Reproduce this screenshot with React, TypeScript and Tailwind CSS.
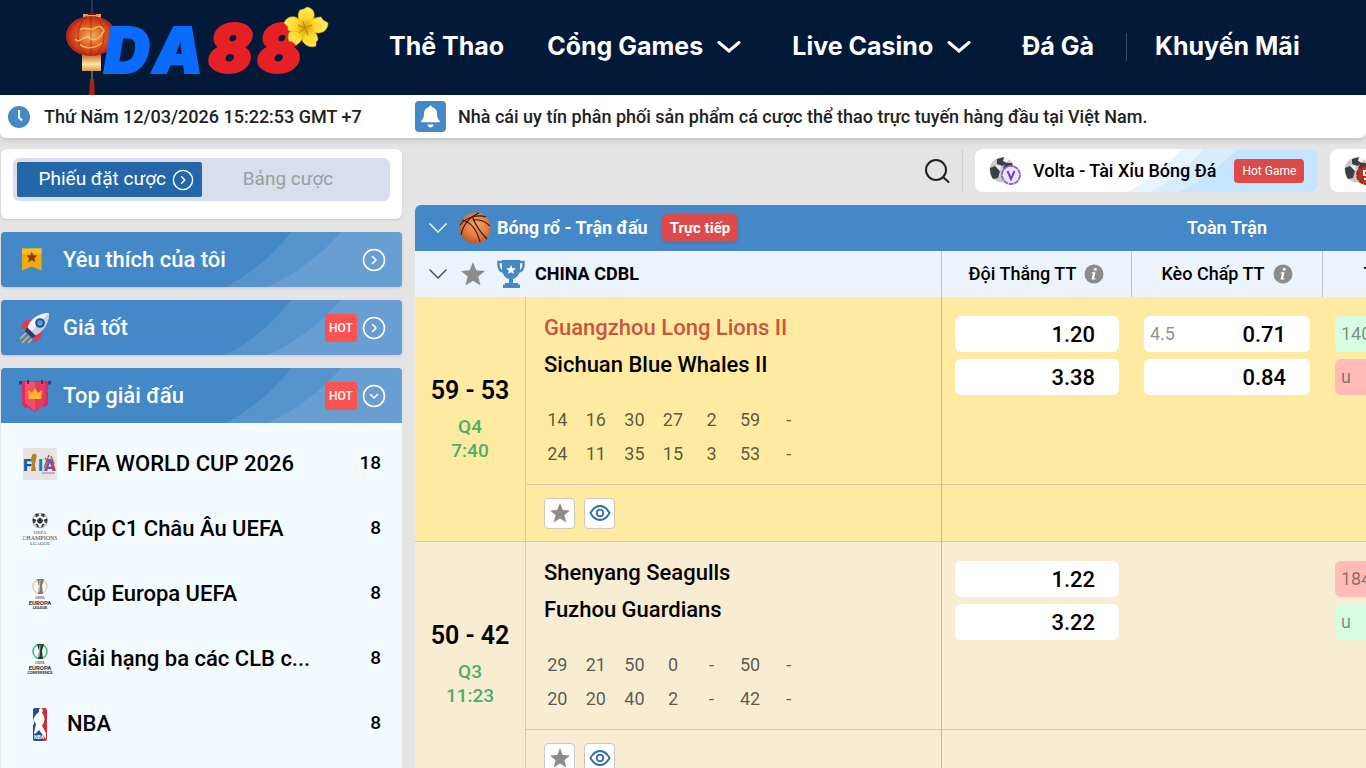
import type { ReactNode } from "react";

type IconProps = { className?: string };

function Logo() {
  return (
    <svg viewBox="0 0 275 95" className="h-[95px] w-[275px]" role="img" aria-label="DA88">
      <defs>
        <radialGradient id="lantern" cx="50%" cy="50%" r="55%">
          <stop offset="0" stopColor="#f3b45c" />
          <stop offset="0.5" stopColor="#dd5a22" />
          <stop offset="1" stopColor="#b81d10" />
        </radialGradient>
        <linearGradient id="lanternCap" x1="0" x2="0" y1="0" y2="1">
          <stop offset="0" stopColor="#b5622c" />
          <stop offset="0.6" stopColor="#ffe3a0" />
          <stop offset="1" stopColor="#d69a4e" />
        </linearGradient>
        <radialGradient id="petal" gradientUnits="userSpaceOnUse" cx="245" cy="28" r="22">
          <stop offset="0" stopColor="#d99a08" />
          <stop offset="0.45" stopColor="#ffd92a" />
          <stop offset="1" stopColor="#ffec66" />
        </radialGradient>
      </defs>
      <path d="M32 0v14" stroke="#4a5263" strokeWidth="1" />
      <path d="M23 14h18v5H23z" fill="#e9a066" />
      <path d="M27 15l5-4 5 4z" fill="#6b1c14" />
      <path d="M22 54h19v17H22z" fill="url(#lanternCap)" />
      <ellipse cx="31" cy="36" rx="25" ry="20" fill="url(#lantern)" />
      <g fill="none" stroke="#8f170d" strokeWidth="1" opacity="0.6">
        <path d="M31 16v39" />
        <path d="M27 16c-12 10-12 30 0 39M35 16c12 10 12 30 0 39" />
        <path d="M23 18c-20 10-20 27 0 36M40 18c19 10 19 27 0 36" />
      </g>
      <path d="M15 39c5 6 9-6 15-1s11-2 14-7M20 30c5-5 10 2 15-2 5-3 8-1 9 4M20 45c7 4 14 4 22-2" stroke="#ffd27a" strokeWidth="1.500" fill="none" opacity="0.75" />
      <path d="M32 71v8" stroke="#c79a56" strokeWidth="1" />
      <path d="M30 79h4l1 16h-6z" fill="#a92318" />
      <g fontFamily="Inter" fontWeight="900" fontStyle="italic" fontSize="63">
        <g fill="#0a6cff" stroke="#0a6cff" strokeWidth="2">
          <text x="44" y="73">D</text>
          <text x="93" y="73">A</text>
        </g>
        <g fill="#e62025" stroke="#e62025" strokeWidth="4" strokeLinejoin="round">
          <text x="149" y="71">8</text>
          <text x="198" y="71">8</text>
        </g>
      </g>
      <g fill="url(#petal)" stroke="#e0a710" strokeWidth="0.6">
        <path d="M245 28c-6-5-9-13-5-18l4-1 3-2c5 1 8 4 7 10-1 5-5 8-9 11z" />
        <path d="M245 28c2-6 8-11 16-11l2 3 5 3c0 6-4 10-10 10-5 0-9-2-13-5z" />
        <path d="M245 28c7 0 13 5 13 12l-2 2v4c-5 2-10 0-13-4-2-4 0-9 2-14z" />
        <path d="M245 28c0 7-3 14-9 17l-3-3-4-1c-2-6 0-10 5-12 4-1 7-1 11-1z" />
        <path d="M245 28c-5 4-12 5-17 2v-3l-4-4c2-5 6-7 11-6 5 2 8 6 10 11z" />
      </g>
      <path d="M245 28l-2-7M245 28l7-3M245 28l3 7M245 28l-6 5M245 28l-7-3" stroke="#b57f08" strokeWidth="1" />
    </svg>
  );
}

function NavChevron() {
  return (
    <svg viewBox="0 0 24 14" className="h-3.5 w-6" fill="none" stroke="currentColor" strokeWidth="3" strokeLinecap="round" aria-hidden="true">
      <path d="M2 2.500l10 8.500 10-8.500" />
    </svg>
  );
}

function ThinChevron({ className }: IconProps) {
  return (
    <svg viewBox="0 0 18 12" className={"h-3 w-[18px] " + (className ?? "")} fill="none" stroke="currentColor" strokeWidth="1.300" aria-hidden="true">
      <path d="M0.500 1.500L9 10l8.500-8.500" />
    </svg>
  );
}

function CircleChevron({ down = false, className }: { down?: boolean; className: string }) {
  return (
    <svg viewBox="0 0 24 24" className={className} fill="none" stroke="currentColor" strokeWidth="1.600" strokeLinecap="round" strokeLinejoin="round" aria-hidden="true">
      <circle cx="12" cy="12" r="10.500" />
      <path d={down ? "M8.500 10.500l3.500 3.500 3.500-3.500" : "M10.500 8.500l3.500 3.500-3.500 3.500"} />
    </svg>
  );
}

function Star({ className }: IconProps) {
  return (
    <svg viewBox="0 0 24 24" className={className} fill="#8c8c8c" aria-hidden="true">
      <path d="M12 0l3.300 8.300 8.700.6-6.700 5.700 2.200 8.900L12 18.700l-7.500 4.800 2.200-8.900L0 8.900l8.700-.6z" />
    </svg>
  );
}

function Eye() {
  return (
    <svg viewBox="0 0 22 18" className="h-[18px] w-[22px]" fill="none" stroke="#2d6cab" strokeWidth="1.800" aria-hidden="true">
      <path d="M1.500 9C4 4.300 7.300 2 11 2s7 2.300 9.500 7C18 13.700 14.700 16 11 16S4 13.700 1.500 9z" />
      <circle cx="11" cy="9" r="3.300" />
    </svg>
  );
}

function Clock() {
  return (
    <svg viewBox="0 0 22 22" className="h-[22px] w-[22px]" aria-hidden="true">
      <circle cx="11" cy="11" r="11" fill="#4488c8" />
      <path d="M11 4v7.500l3 3" fill="none" stroke="#fff" strokeWidth="2" />
    </svg>
  );
}

function Bell() {
  return (
    <svg viewBox="0 0 31 31" className="h-[31px] w-[31px]" aria-hidden="true">
      <rect width="31" height="31" rx="4" fill="#4488c8" />
      <path d="M15.500 4.500a1.500 1.500 0 0 1 1.500 1.600c3.200.8 5 3.200 5 6.700 0 3.800.9 5.300 2.600 6.800v1.600H6.400v-1.600C8.100 18.100 9 16.600 9 12.800c0-3.500 1.800-5.900 5-6.700a1.500 1.500 0 0 1 1.500-1.600zM12.500 23.500h6c-.3 2-1.400 3-3 3s-2.700-1-3-3z" fill="#fff" />
    </svg>
  );
}

function Bookmark() {
  return (
    <svg viewBox="0 0 34 34" className="h-[34px] w-[34px]" aria-hidden="true">
      <path d="M4 5.500h19.500v22l-9.700-4L4 27.500z" fill="#f2a90c" />
      <path d="M4 5.500h19.500v5H4z" fill="#fbbd22" />
      <path d="M13.800 8.500l1.600 3.800 4 .3-3 2.600 1 4-3.600-2.200-3.600 2.200 1-4-3-2.600 4-.3z" fill="#8a3a0c" />
    </svg>
  );
}

function Rocket() {
  return (
    <svg viewBox="0 0 34 34" className="h-[34px] w-[34px]" aria-hidden="true">
      <path d="M13 9c-6-1-10 3-10 9l8 1zM24 20c1 6-3 11-9 11l-1-8z" fill="#d6404f" />
      <path d="M9 18C12 8 20 2 31 2c0 11-6 19-15 23z" fill="#f2f0fb" />
      <path d="M31 2c0 11-6 19-15 23l-3.500-3.500z" fill="#c9cde8" />
      <path d="M9 16l9 9-4 2-7-7z" fill="#2f3c6b" />
      <circle cx="22" cy="12" r="4.800" fill="#24527e" />
      <circle cx="22" cy="12" r="2.700" fill="#50a6df" />
      <path d="M8 22l-6 6M11 25l-7 7M14 28l-4 4" stroke="#e8b85a" strokeWidth="1.500" />
    </svg>
  );
}

function Banner() {
  return (
    <svg viewBox="0 0 34 34" className="h-[34px] w-[34px]" aria-hidden="true">
      <path d="M1 2h32v3.500H1z" fill="#47366b" />
      <path d="M4 2h26v23l-3 3-3-1-7 6-7-5-3 1-3-3z" fill="#d92c5f" />
      <path d="M7 3h20v21l-10 8-10-8z" fill="#f3516b" />
      <path d="M17 3h10v21l-10 8z" fill="#df3c62" />
      <path d="M10 11l4 3 3-5 3 5 4-3-1 9H11z" fill="#ffb62e" />
      <path d="M10 1v4M24 1v4" stroke="#532c61" strokeWidth="2" />
    </svg>
  );
}

function Basketball() {
  return (
    <svg viewBox="0 0 32 32" className="h-8 w-8" aria-hidden="true">
      <defs>
        <radialGradient id="ball" cx="55%" cy="40%" r="65%">
          <stop offset="0" stopColor="#f5a26c" />
          <stop offset="0.600" stopColor="#e27840" />
          <stop offset="1" stopColor="#b4511f" />
        </radialGradient>
      </defs>
      <circle cx="16" cy="16" r="15.500" fill="url(#ball)" />
      <g fill="none" stroke="#3a1a0e" strokeWidth="1.200">
        <path d="M13 4c3 8 8 16 15 23" />
        <path d="M3 8c9 2 15 10 18 22" />
        <path d="M1 13C6 6 18 2 27 5" />
        <path d="M2 23C4 13 11 5 20 1" />
        <path d="M14 8c6-1 12 1 17 6" />
      </g>
    </svg>
  );
}

function Trophy() {
  return (
    <svg viewBox="0 0 28 28" className="h-7 w-7" fill="#4488c8" aria-hidden="true">
      <path d="M5 0h18v9c0 5-3 9-7 10v4h5v1.500h2V28H6v-3.500h2V23h4v-4C8 18 5 14 5 9z" />
      <path d="M6 2H1.500v3c0 4 2 6.500 6 7M22 2h4.500v3c0 4-2 6.500-6 7" fill="none" stroke="#4488c8" strokeWidth="2.400" />
      <path d="M14 5l1.400 3.200 3.400.3-2.600 2.200.8 3.300-3-1.800-3 1.800.8-3.300-2.600-2.200 3.400-.3z" fill="#fff" />
    </svg>
  );
}

function SoccerBadge({ color, fill, children }: { color: string; fill: string; children: ReactNode }) {
  return (
    <svg viewBox="0 0 32 30" className="h-[30px] w-8 shrink-0" aria-hidden="true">
      <circle cx="13" cy="14" r="12.500" fill="#c9c9c9" />
      <path d="M8 3l7-2 4 5-5 4-6-2zM1 12l5-2 5 5-2 7-5 1c-2-3-3-7-3-11zM17 7l6 0 2 6-7 3-4-4z" fill="#3d3f45" />
      <path d="M15 1l5 2-2 4-4-2zM6 9l6 1-1 5z" fill="#f3f3f3" />
      <circle cx="22" cy="19" r="9" fill={fill} stroke={color} strokeWidth="1.800" strokeDasharray="5 0.600" />
      {children}
    </svg>
  );
}

function InfoIcon() {
  return (
    <svg viewBox="0 0 20 20" className="h-5 w-5" role="img" aria-label="Thông tin">
      <circle cx="10" cy="10" r="9.500" fill="#8b8b8b" />
      <circle cx="11.300" cy="5.300" r="1.500" fill="#fff" />
      <path d="M8 8.300h3.500L10 14.500l1.500-.2-.3 1.200H7.500l1.400-6H7.800z" fill="#fff" />
    </svg>
  );
}

function FifaIcon() {
  return (
    <svg viewBox="0 0 34 32" className="h-8 w-[34px]" aria-hidden="true">
      <rect width="34" height="32" fill="#e6e3e1" />
      <g fontFamily="Roboto" fontWeight="900" fontSize="17">
        <text x="0" y="23" fill="#17609c">F</text>
        <text x="15" y="23" fill="#197bb5">I</text>
        <text x="21" y="23" fill="#7d4f9e">A</text>
      </g>
      <path d="M9 7c3-3 6 0 4 4l-1 6 1 6H8l1-6-1-6z" fill="#b87f2d" />
      <path d="M22 10l3 4-2 4M28 8l3 8" stroke="#33a263" strokeWidth="1.500" fill="none" />
      <path d="M26 7l-5 13M29 12l3 10" stroke="#d9376a" strokeWidth="1.300" />
      <path d="M19 25h13" stroke="#8a8a8a" strokeWidth="1" />
    </svg>
  );
}

function ChampionsIcon() {
  return (
    <svg viewBox="0 0 34 32" className="h-8 w-[34px]" aria-hidden="true">
      <circle cx="17" cy="7.500" r="7.300" fill="#fff" stroke="#777" strokeWidth="0.800" />
      <path d="M17 5l2.600 2-1 3h-3.200l-1-3zM13 1l3 1-3 2zM21 1l-3 1 3 2zM10 6l3 1-2 3zM24 6l-3 1 2 3zM13 11l2 1v2zM21 11l-2 1v2z" fill="#333" stroke="#333" />
      <g fontFamily="Liberation Serif" textAnchor="middle" fill="#444">
        <text x="17" y="21" fontSize="5">UEFA</text>
        <text x="17" y="27" fontSize="6">CHAMPIONS</text>
        <text x="17" y="32" fontSize="5">LEAGUE</text>
      </g>
    </svg>
  );
}

function EuropaIcon({ ring, conference = false }: { ring: string; conference?: boolean }) {
  return (
    <svg viewBox="0 0 34 32" className="h-8 w-[34px]" aria-hidden="true">
      <circle cx="17" cy="8.500" r="7" fill="none" stroke={ring} strokeWidth="1.500" />
      <path d="M14 1h7l-2 7 1 8h-5l1-8z" fill={conference ? "#263d33" : "#7a7a7a"} />
      <path d="M17 2l-1 12" stroke="#ddd" strokeWidth="0.800" />
      <g fontFamily="Roboto" textAnchor="middle" fill="#333" fontWeight="700">
        <text x="17" y="21" fontSize="4" fill="#777">UEFA</text>
        <text x="17" y="27" fontSize="6">EUROPA</text>
        <text x="17" y="31" fontSize="4">{conference ? "CONFERENCE" : "LEAGUE"}</text>
      </g>
    </svg>
  );
}

function NbaIcon() {
  return (
    <svg viewBox="0 0 34 34" className="h-[34px] w-[34px]" aria-hidden="true">
      <rect x="10" y="1" width="14" height="33" rx="2.500" fill="#c92a3c" />
      <path d="M12.500 1H17l-1 8-3 7 5 7 2 11h-7.500A2.500 2.500 0 0 1 10 31.500v-28A2.500 2.500 0 0 1 12.500 1z" fill="#22509a" />
      <path d="M16 2c3-2 5 1 3 4 2 2 3 5 2 9l-2 4 4 7v6l-7-9-4 4-1-1 2-9-2-3 0 4-1-1c0-6 2-9 6-12z" fill="#fff" />
      <text x="11" y="32" fontSize="5" fontWeight="700" fontFamily="Roboto" fill="#fff">NBA</text>
    </svg>
  );
}

const navItems = [
  { label: "Thể Thao", menu: false },
  { label: "Cổng Games", menu: true },
  { label: "Live Casino", menu: true },
  { label: "Đá Gà", menu: false },
];

function PanelButton({ icon, label, hot = false, open = false }: { icon: ReactNode; label: string; hot?: boolean; open?: boolean }) {
  return (
    <button
      type="button"
      aria-expanded={open}
      className={"relative flex h-[55px] w-full shrink-0 items-center overflow-hidden bg-[#4488c8] pr-4 pl-[17px] text-left text-white " + (open ? "rounded-t" : "rounded shadow-sm")}
    >
      <svg viewBox="0 0 180 55" className="absolute top-0 right-0 h-full w-[180px]" fill="#fff" aria-hidden="true">
        <path d="M4 55Q42 35 69 0H180V55z" opacity="0.100" />
        <path d="M45 55Q88 36 119 0H180V55z" opacity="0.100" />
      </svg>
      {icon}
      <span className="relative ml-[11px] flex-1 text-[22px] font-medium">{label}</span>
      {hot && <span className="relative mr-[5px] flex h-7 w-8 items-center justify-center rounded-xs bg-[#fb5252] text-xs font-medium">HOT</span>}
      <CircleChevron down={open} className="relative h-6 w-6" />
    </button>
  );
}

const leagues = [
  { name: "FIFA WORLD CUP 2026", count: 18, icon: <FifaIcon /> },
  { name: "Cúp C1 Châu Âu UEFA", count: 8, icon: <ChampionsIcon /> },
  { name: "Cúp Europa UEFA", count: 8, icon: <EuropaIcon ring="#efcdb2" /> },
  { name: "Giải hạng ba các CLB c...", count: 8, icon: <EuropaIcon ring="#35c75a" conference /> },
  { name: "NBA", count: 8, icon: <NbaIcon /> },
];

type Odd = { tag?: string; price: string; tone?: "up" | "down" };

type Match = {
  score: string;
  period: string;
  clock: string;
  teams: { name: string; favourite?: boolean }[];
  lines: string[][];
  odds: Odd[][];
  background: string;
};

const matches: Match[] = [
  {
    score: "59 - 53",
    period: "Q4",
    clock: "7:40",
    teams: [{ name: "Guangzhou Long Lions II", favourite: true }, { name: "Sichuan Blue Whales II" }],
    lines: [
      ["14", "16", "30", "27", "2", "59", "-"],
      ["24", "11", "35", "15", "3", "53", "-"],
    ],
    odds: [
      [{ price: "1.20" }, { price: "3.38" }],
      [{ tag: "4.5", price: "0.71" }, { price: "0.84" }],
      [{ tag: "140.5", price: "0.80", tone: "up" }, { tag: "u", price: "0.76", tone: "down" }],
    ],
    background: "bg-[#feeba1]",
  },
  {
    score: "50 - 42",
    period: "Q3",
    clock: "11:23",
    teams: [{ name: "Shenyang Seagulls" }, { name: "Fuzhou Guardians" }],
    lines: [
      ["29", "21", "50", "0", "-", "50", "-"],
      ["20", "20", "40", "2", "-", "42", "-"],
    ],
    odds: [
      [{ price: "1.22" }, { price: "3.22" }],
      [],
      [{ tag: "184.5", price: "0.78", tone: "down" }, { tag: "u", price: "0.78", tone: "up" }],
    ],
    background: "bg-[#f8ecd3]",
  },
];

const tones = { up: "bg-[#d6fde4]", down: "bg-[#febbb7]" };

function OddButton({ odd }: { odd: Odd }) {
  return (
    <button type="button" className={"flex h-9 w-full items-center justify-between rounded-md pr-6 pl-1.5 " + (odd.tone ? tones[odd.tone] : "bg-white")}>
      <span className="text-lg text-black/45">{odd.tag}</span>
      <span className="text-[22px] font-medium">{odd.price}</span>
    </button>
  );
}

function MatchRows({ match }: { match: Match }) {
  return (
    <tbody className={match.background}>
      <tr>
        <td rowSpan={2} className="border-b border-[#d5cbb5] text-center align-middle">
          <div className="text-[25px] leading-9 font-semibold">{match.score}</div>
          <div className="mt-1.5 mb-0.5 text-[19px] leading-6 font-medium text-[#4cae68]">
            <div>{match.period}</div>
            <div>{match.clock}</div>
          </div>
        </td>
        <td className="h-[188px] border-b border-l border-[#d5cbb5] pt-3 pl-[18px] align-top">
          {match.teams.map((team) => (
            <div key={team.name} className={"text-[22px] leading-[37px] font-medium " + (team.favourite ? "text-[#cb533f]" : "text-black")}>
              {team.name}
            </div>
          ))}
          <table className="mt-5 -ml-1.5 w-[270px] table-fixed text-center text-lg text-black/65">
            <tbody>
              {match.lines.map((line, i) => (
                <tr key={i} className="h-[34px]">
                  {line.map((value, j) => (
                    <td key={j}>{value}</td>
                  ))}
                </tr>
              ))}
            </tbody>
          </table>
        </td>
        {match.odds.map((column, i) => (
          <td key={i} className={"border-b border-[#d5cbb5] pt-[19px] pr-3 pl-[13px] align-top " + (i === 0 ? "border-l border-l-[#bbb7ad]" : "")}>
            <div className="flex flex-col gap-[7px]">
              {column.map((odd, j) => (
                <OddButton key={j} odd={odd} />
              ))}
            </div>
          </td>
        ))}
      </tr>
      <tr>
        <td className="h-[57px] border-b border-l border-[#d5cbb5] pl-[18px]">
          <div className="flex gap-[9px]">
            <button type="button" aria-label="Yêu thích" className="flex h-[31px] w-[31px] items-center justify-center rounded border border-[#cfc8c0] bg-white">
              <Star className="h-5 w-5" />
            </button>
            <button type="button" aria-label="Xem trận" className="flex h-[31px] w-[31px] items-center justify-center rounded border border-[#cfc8c0] bg-white">
              <Eye />
            </button>
          </div>
        </td>
        <td colSpan={3} className="border-b border-l border-[#d5cbb5] border-l-[#bbb7ad]" />
      </tr>
    </tbody>
  );
}

export default function App() {
  return (
    <div className="flex h-screen flex-col overflow-hidden bg-[#e4e4e4] font-['Roboto',sans-serif] text-black">
      <header className="flex h-[95px] shrink-0 items-center bg-[#021938] text-white">
        <a href="#home" className="ml-[60px] shrink-0">
          <Logo />
        </a>
        <nav className="ml-[54px] flex items-center pb-0.5 font-['Inter',sans-serif] text-[25px] font-bold whitespace-nowrap">
          <div className="flex items-center gap-[43px]">
            {navItems.map((item) => (
              <a key={item.label} href={"#" + item.label} className={"flex items-center gap-3.5 " + (item.menu ? "mr-2" : "")}>
                {item.label}
                {item.menu && <NavChevron />}
              </a>
            ))}
          </div>
          <span className="mr-7 ml-8 h-7 w-px bg-[#3b4b66]" />
          <a href="#promo">Khuyến Mãi</a>
        </nav>
      </header>

      <div className="relative flex h-[43px] shrink-0 items-center rounded-b-md bg-white text-lg font-medium whitespace-nowrap text-[#222] shadow-md">
        <div className="flex w-[415px] shrink-0 items-center gap-3.5 pl-2">
          <Clock />
          <time dateTime="2026-03-12T15:22:53+07:00">Thứ Năm 12/03/2026 15:22:53 GMT +7</time>
        </div>
        <div className="flex items-center gap-3">
          <Bell />
          <p>Nhà cái uy tín phân phối sản phẩm cá cược thể thao trực tuyến hàng đầu tại Việt Nam.</p>
        </div>
      </div>

      <div className="flex min-h-0 flex-1 gap-[13px]">
        <aside className="flex w-[402px] shrink-0 flex-col gap-[13px] pt-[11px] pl-px">
          <div className="h-[70px] shrink-0 rounded-md bg-white px-3 pt-[9px] shadow-sm">
            <div className="flex h-[43px] gap-1 rounded-md bg-[#d8deeb] p-1 text-[19px]">
              <button type="button" className="flex w-[185px] items-center justify-end gap-1.5 rounded-xs bg-[#2367a8] pr-2 text-white">
                Phiếu đặt cược
                <CircleChevron className="h-[22px] w-[22px]" />
              </button>
              <button type="button" className="flex-1 pr-4 text-[#9a9da3]">
                Bảng cược
              </button>
            </div>
          </div>
          <PanelButton icon={<Bookmark />} label="Yêu thích của tôi" />
          <PanelButton icon={<Rocket />} label="Giá tốt" hot />
          <section className="flex min-h-0 flex-1 flex-col">
            <PanelButton icon={<Banner />} label="Top giải đấu" hot open />
            <ul className="min-h-0 flex-1 overflow-hidden bg-[#f4fbff] pt-2">
              {leagues.map((league) => (
                <li key={league.name}>
                  <a href={"#" + league.name} className="flex h-[65px] items-center pr-[21px] pl-[22px] font-medium whitespace-nowrap">
                    {league.icon}
                    <span className="ml-2.5 text-[22px]">{league.name}</span>
                    <span className="ml-auto text-[19px]">{league.count}</span>
                  </a>
                </li>
              ))}
            </ul>
          </section>
        </aside>

        <main className="min-w-0 flex-1 overflow-hidden">
          <div className="flex h-[67px] items-center pb-0.5 whitespace-nowrap">
            <div className="flex w-[560px] shrink-0 items-center justify-end gap-3 pr-3">
              <button type="button" aria-label="Tìm kiếm">
                <svg viewBox="0 0 26 26" className="h-[26px] w-[26px]" fill="none" stroke="#222" strokeWidth="2" strokeLinecap="round" aria-hidden="true">
                  <circle cx="12" cy="12" r="10" />
                  <path d="M19.500 19.500l5 4.500" />
                </svg>
              </button>
              <span className="h-[43px] w-px bg-[#cfcfcf]" />
            </div>
            <button type="button" className="relative flex h-[43px] w-[343px] shrink-0 items-center overflow-hidden rounded-lg bg-white pl-3.5">
              <svg viewBox="0 0 190 43" className="absolute top-0 right-0 h-full w-[190px]" aria-hidden="true">
                <path d="M0 43Q32 25 54 0H190V43z" fill="#e9f5fe" />
                <path d="M22 43Q55 25 76 0H190V43z" fill="#d6edfd" />
                <path d="M52 43Q85 25 110 0H190V43z" fill="#c4e5fd" />
              </svg>
              <span className="relative">
                <SoccerBadge color="#8d61d6" fill="#eee4ff">
                  <path d="M18.500 15l3.500 8 3.500-8" fill="none" stroke="#6c3cc4" strokeWidth="2" />
                </SoccerBadge>
              </span>
              <span className="relative ml-3 text-lg font-medium">Volta - Tài Xỉu Bóng Đá</span>
              <span className="relative ml-[18px] rounded bg-[#dc4a4b] px-2 py-1 text-xs leading-4 text-white">Hot Game</span>
            </button>
            <button type="button" aria-label="Trò chơi kế tiếp" className="ml-3 flex h-[43px] w-[343px] shrink-0 items-center rounded-lg bg-white pl-3.5">
              <SoccerBadge color="#9c2416" fill="#b53420">
                <path d="M26 15h-6v4h6v4h-6" fill="none" stroke="#fff" strokeWidth="2" />
              </SoccerBadge>
            </button>
          </div>

          <table className="w-[1098px] table-fixed border-separate border-spacing-0">
            <colgroup>
              <col className="w-[110px]" />
              <col className="w-[416px]" />
              <col className="w-[190px]" />
              <col className="w-[191px]" />
              <col className="w-[191px]" />
            </colgroup>
            <thead>
              <tr className="h-[46px] text-white">
                <th colSpan={2} className="rounded-tl-md bg-[#4488c8] pl-3.5 text-left">
                  <div className="flex items-center">
                    <ThinChevron />
                    <span className="mr-1.5 ml-3">
                      <Basketball />
                    </span>
                    <span className="text-lg font-bold">Bóng rổ - Trận đấu</span>
                    <span className="ml-3.5 rounded-md bg-[#dc4a4b] px-2 py-1 text-[15px] leading-5 font-bold shadow">Trực tiếp</span>
                  </div>
                </th>
                <th colSpan={3} className="bg-[#4488c8] text-lg font-semibold">
                  Toàn Trận
                </th>
              </tr>
              <tr className="h-[46px] bg-[#edf3fb]">
                <th colSpan={2} className="pl-3.5 text-left">
                  <div className="flex items-center">
                    <ThinChevron className="text-[#444]" />
                    <Star className="mr-3 ml-3.5 h-6 w-6" />
                    <Trophy />
                    <span className="ml-2.5 text-lg font-bold">CHINA CDBL</span>
                  </div>
                </th>
                {["Đội Thắng TT", "Kèo Chấp TT", "Tài Xỉu TT"].map((title) => (
                  <th key={title} className="border-l border-[#bfc2c8] text-lg font-medium">
                    <div className="flex items-center justify-center gap-2">
                      {title}
                      <InfoIcon />
                    </div>
                  </th>
                ))}
              </tr>
            </thead>
            {matches.map((match) => (
              <MatchRows key={match.score} match={match} />
            ))}
          </table>
        </main>
      </div>
    </div>
  );
}
